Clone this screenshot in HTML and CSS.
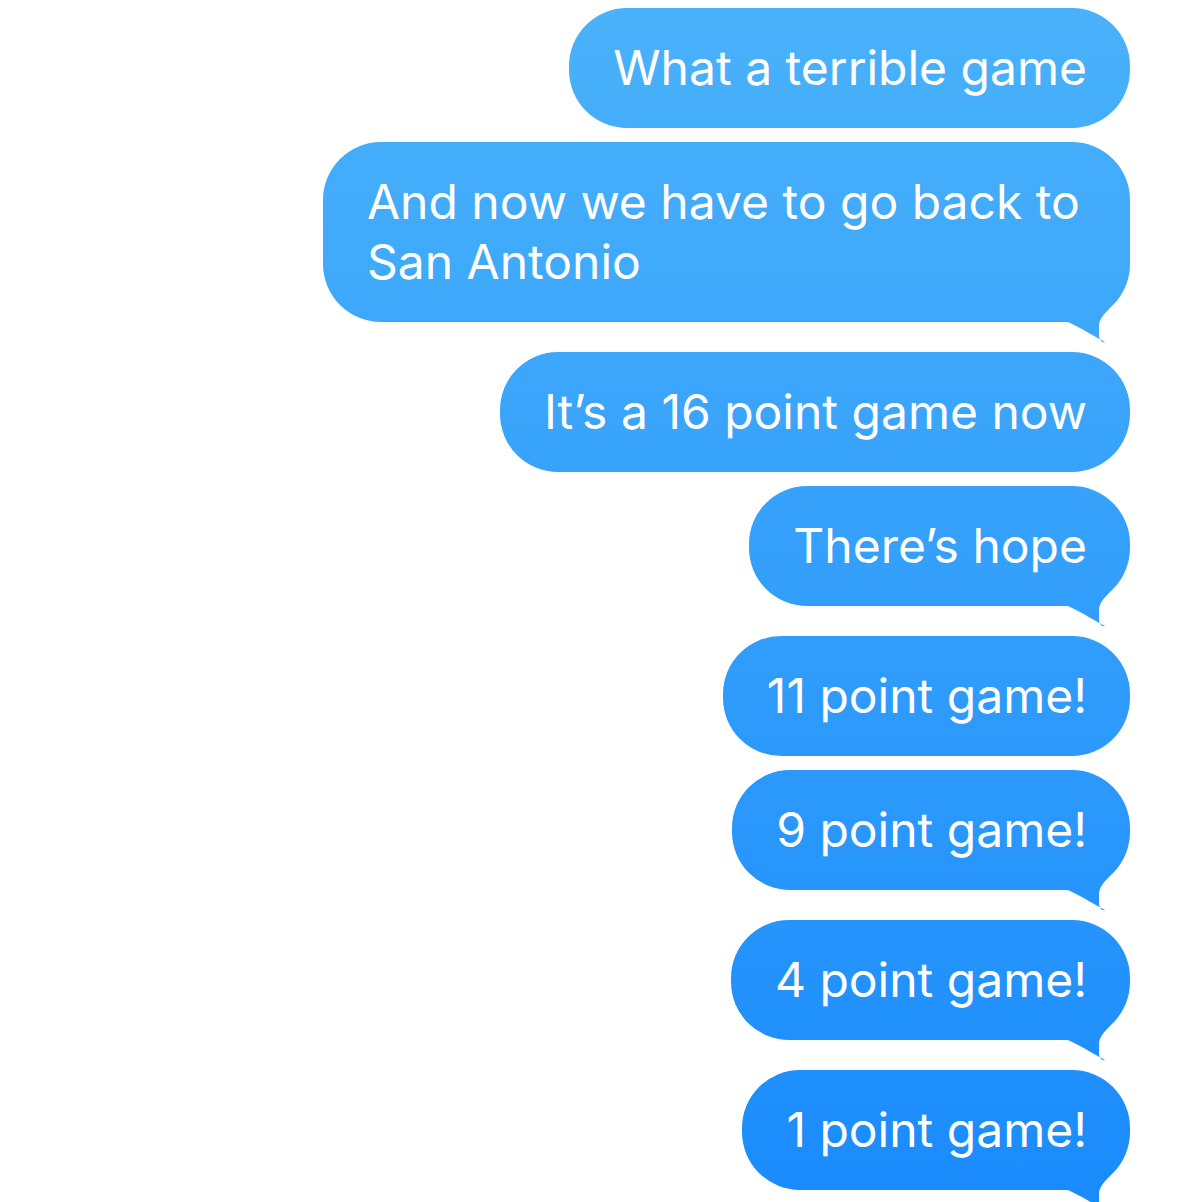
FILE: index.html
```html
<!DOCTYPE html>
<html>
	<head>
		<meta charset="UTF-8">
		<title>Messages</title>
		<link rel="stylesheet" href="styles.css">
	</head>
	<body>
		<div class="thread">
			<div class="bubble">What a terrible game</div>
			<div class="bubble tail">And now we have to go back to San Antonio</div>
			<div class="bubble">It’s a 16 point game now</div>
			<div class="bubble tail">There’s hope</div>
			<div class="bubble">11 point game!</div>
			<div class="bubble tail">9 point game!</div>
			<div class="bubble tail">4 point game!</div>
			<div class="bubble tail">1 point game!</div>
		</div>
	</body>
</html>
```

FILE: styles.css
```css
*{
	margin: 0;
	padding: 0;
	box-sizing: border-box;
}
body{
	background: #fff;
	font-family: Inter, "Noto Sans", sans-serif;
}
.thread{
	display: flex;
	flex-direction: column;
	align-items: flex-end;
	padding: 8px 49px 0 0;
}
.bubble{
	position: relative;
	max-width: 807px;
	padding: 30px 43px 30px 44px;
	border-radius: 58px;
	font-size: 48px;
	line-height: 60px;
	color: #fff;
	margin-bottom: 14px;
	background: linear-gradient(#4ab2fa, #1a8bfc) fixed;
	background-size: 100% 1202px;
}
.tail{
	margin-bottom: 30px;
}
.tail::after{
	content: "";
	position: absolute;
	right: 0;
	bottom: -21px;
	width: 62px;
	height: 46px;
	background: linear-gradient(#4ab2fa, #1a8bfc) fixed;
	background-size: 100% 1202px;
	clip-path: path("M0 0 H50 C42 14 31 18 31 30 V38 C31 43 34 46 37 45 C29 41 15 32 0 25 Z");
}
```
